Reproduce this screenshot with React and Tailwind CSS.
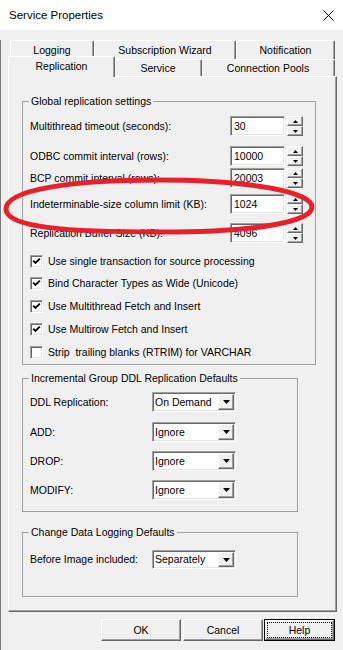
import React from "react";

const SUNKEN =
  "border border-t-[#a0a0a0] border-l-[#a0a0a0] border-r-white border-b-white shadow-[inset_1px_1px_0_#696969,inset_-1px_-1px_0_#e3e3e3]";
const RAISED =
  "border border-t-white border-l-white border-r-[#696969] border-b-[#696969] shadow-[inset_-1px_-1px_0_#a0a0a0]";

function BackTab({ w, label }) {
  return (
    <div
      className={`${w} h-[19px] flex justify-center pt-[3px] bg-[#f0f0f0] border-t border-l border-r border-t-white border-l-white border-r-[#696969] rounded-t-[2px] shadow-[inset_-1px_0_0_#a0a0a0]`}
    >
      {label}
    </div>
  );
}

function SpinUp() {
  return (
    <svg width="5" height="3" viewBox="0 0 5 3">
      <polygon points="2.5,0 5,3 0,3" fill="#000" />
    </svg>
  );
}
function SpinDown() {
  return (
    <svg width="5" height="3" viewBox="0 0 5 3">
      <polygon points="0,0 5,0 2.5,3" fill="#000" />
    </svg>
  );
}

function NumRow({ label, value, mt }) {
  return (
    <div className={`flex items-center h-[20px] pl-[7px] ${mt}`}>
      <span className="w-[200px] shrink-0">{label}</span>
      <div className={`w-[55px] h-[20px] bg-white flex items-center pl-[3px] ${SUNKEN}`}>{value}</div>
      <div className="ml-[2px] w-[16px] h-[20px] flex flex-col">
        <div className={`h-[10px] bg-[#f0f0f0] flex items-center justify-center ${RAISED}`}>
          <SpinUp />
        </div>
        <div className={`h-[10px] bg-[#f0f0f0] flex items-center justify-center ${RAISED}`}>
          <SpinDown />
        </div>
      </div>
    </div>
  );
}

function Check({ label, checked, mt }) {
  return (
    <div className={`flex items-center h-[17px] pl-[7px] ${mt}`}>
      <div className={`w-[13px] h-[13px] bg-white flex items-center justify-center ${SUNKEN}`}>
        {checked && (
          <svg width="9" height="9" viewBox="0 0 9 9">
            <path d="M1.2 3.6 L3.5 6 L7.8 1.6" stroke="#000" strokeWidth="1.9" fill="none" />
          </svg>
        )}
      </div>
      <span className="ml-[5px] whitespace-pre">{label}</span>
    </div>
  );
}

function Combo({ label, value, mt, h = "h-[20px]" }) {
  return (
    <div className={`flex items-center pl-[7px] ${mt}`}>
      <span className="w-[122px] shrink-0">{label}</span>
      <div className={`w-[84px] ${h} bg-white flex items-stretch p-[1px] ${SUNKEN}`}>
        <span className="flex-1 flex items-center pl-[1px]">{value}</span>
        <div className={`w-[16px] bg-[#f0f0f0] flex items-center justify-center ${RAISED}`}>
          <svg width="7" height="4" viewBox="0 0 7 4">
            <polygon points="0,0 7,0 3.5,4" fill="#000" />
          </svg>
        </div>
      </div>
    </div>
  );
}

function Group({ title, className, children }) {
  return (
    <fieldset className={`border border-[#a0a0a0] ${className}`}>
      <legend className="ml-[6px] px-[2px] leading-[13px]">{title}</legend>
      {children}
    </fieldset>
  );
}

export default function App() {
  return (
    <div className="relative w-[343px] h-[650px] overflow-hidden bg-[#f0f0f0] text-black font-['Liberation_Sans',Arial,sans-serif] text-[10.5px] leading-[13px]">
      <div className="h-[30px] bg-white flex items-center justify-between pl-[9px] pr-[9px]">
        <span className="text-[11.5px]">Service Properties</span>
        <svg width="11" height="11" viewBox="0 0 11 11">
          <path d="M0.5 0.5 L10.5 10.5 M10.5 0.5 L0.5 10.5" stroke="#000" strokeWidth="1" />
        </svg>
      </div>

      <div className="h-[620px] border-l border-l-[#7a7a7a]">
        {/* back tab row */}
        <div className="mt-[10px] ml-[9px] flex h-[17px]">
          <BackTab w="w-[84px]" label="Logging" />
          <BackTab w="w-[142px]" label="Subscription Wizard" />
          <BackTab w="w-[99px]" label="Notification" />
        </div>
        {/* front tab row */}
        <div className="ml-[7px] flex items-end h-[19px] relative z-10">
          <div className="w-[107px] h-[21px] -mb-[1px] flex justify-center pt-[3px] bg-[#f0f0f0] border-t border-l border-r border-t-white border-l-white border-r-[#696969] rounded-t-[2px] shadow-[inset_-1px_0_0_#a0a0a0]">
            Replication
          </div>
          <div className="w-[87px] h-[17px] flex justify-center pt-[2px] bg-[#f0f0f0] border-t border-r border-t-white border-r-[#696969] rounded-t-[2px] shadow-[inset_-1px_0_0_#a0a0a0]">
            Service
          </div>
          <div className="w-[133px] h-[17px] flex justify-center pt-[2px] bg-[#f0f0f0] border-t border-r border-t-white border-r-[#696969] rounded-t-[2px] shadow-[inset_-1px_0_0_#a0a0a0]">
            Connection Pools
          </div>
        </div>

        {/* panel */}
        <div className="ml-[7px] w-[329px] h-[536px] border border-t-white border-l-white border-r-[#696969] border-b-[#696969] shadow-[inset_-1px_-1px_0_#a0a0a0] pt-[18px] pl-[13px]">
          <Group title="Global replication settings" className="w-[294px] h-[270px]">
            <NumRow label="Multithread timeout (seconds):" value="30" mt="mt-[8px]" />
            <NumRow label="ODBC commit interval (rows):" value="10000" mt="mt-[10px]" />
            <NumRow label="BCP commit interval (rows):" value="20003" mt="mt-[2px]" />
            <NumRow label="Indeterminable-size column limit (KB):" value="1024" mt="mt-[6px]" />
            <NumRow label="Replication Buffer Size (KB):" value="4096" mt="mt-[9px]" />
            <Check label="Use single transaction for source processing" checked mt="mt-[10px]" />
            <Check label="Bind Character Types as Wide (Unicode)" checked mt="mt-[5px]" />
            <Check label="Use Multithread Fetch and Insert" checked mt="mt-[6px]" />
            <Check label="Use Multirow Fetch and Insert" checked mt="mt-[6px]" />
            <Check label="Strip  trailing blanks (RTRIM) for VARCHAR" mt="mt-[6px]" />
          </Group>

          <Group title="Incremental Group DDL Replication Defaults" className="mt-[7px] w-[276px] h-[140px]">
            <Combo label="DDL Replication:" value="On Demand" mt="mt-[7px]" />
            <Combo label="ADD:" value="Ignore" mt="mt-[10px]" />
            <Combo label="DROP:" value="Ignore" mt="mt-[9px]" />
            <Combo label="MODIFY:" value="Ignore" mt="mt-[9px]" />
          </Group>

          <Group title="Change Data Logging Defaults" className="mt-[14px] w-[276px] h-[71px]">
            <Combo label="Before Image included:" value="Separately" mt="mt-[11px]" h="h-[19px]" />
          </Group>
        </div>

        {/* buttons */}
        <div className="mt-[7px] pl-[100px] flex">
          <div className={`w-[80px] h-[22px] flex items-center justify-center bg-[#f0f0f0] ${RAISED}`}>OK</div>
          <div className={`ml-[2px] w-[80px] h-[22px] flex items-center justify-center bg-[#f0f0f0] ${RAISED}`}>Cancel</div>
          <div className="ml-[1px] w-[71px] h-[22px] border border-black p-0">
            <div className={`w-full h-full flex items-center justify-center bg-[#f0f0f0] ${RAISED}`}>
              <div className="w-[65px] h-[16px] border border-dotted border-black flex items-center justify-center">Help</div>
            </div>
          </div>
        </div>
      </div>

      {/* red hand-drawn ellipse annotation */}
      <svg className="absolute left-0 top-0 pointer-events-none" width="343" height="650" viewBox="0 0 343 650">
        <path
          d="M6 209 C 6 190, 70 180, 158 180 C 250 180, 312 192, 312 207 C 312 223, 250 232, 160 232 C 70 232, 6 228, 6 209 Z"
          fill="none"
          stroke="#e8202a"
          strokeWidth="5"
        />
      </svg>
    </div>
  );
}
